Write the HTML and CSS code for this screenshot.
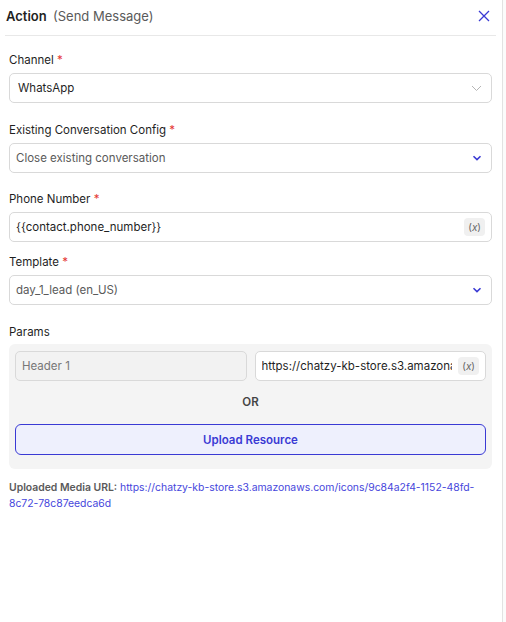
FILE: index.html
```html
<!DOCTYPE html>
<html lang="en">
<head>
    <meta charset="UTF-8">
    <meta name="viewport" content="width=device-width, initial-scale=1.0">
    <title>Action - Send Message</title>
    <link rel="stylesheet" href="styles.css">
</head>
<body>
    <div class="panel">
        <div class="panel-header">
            <div class="panel-title">Action <span class="subtitle">(Send Message)</span></div>
            <button class="close-btn" aria-label="Close">
                <svg width="12" height="12" viewBox="0 0 12 12"><path d="M1 1L11 11M11 1L1 11" stroke="currentColor" stroke-width="1.3" fill="none"/></svg>
            </button>
        </div>

        <form class="panel-body">
            <div class="field">
                <label>Channel <span class="req">*</span></label>
                <div class="select select-channel">
                    <span>WhatsApp</span>
                    <svg class="chevron muted" width="11" height="7" viewBox="0 0 11 7"><path d="M1 1l4.5 4.5L10 1" stroke="currentColor" stroke-width="1" fill="none"/></svg>
                </div>
            </div>

            <div class="field field-config">
                <label>Existing Conversation Config <span class="req">*</span></label>
                <div class="select">
                    <span class="placeholder">Close existing conversation</span>
                    <svg class="chevron" width="10" height="6" viewBox="0 0 10 6"><path d="M1.5 1.2L5 4.6l3.5-3.4" stroke="currentColor" stroke-width="1.6" fill="none"/></svg>
                </div>
            </div>

            <div class="field field-phone">
                <label>Phone Number <span class="req">*</span></label>
                <div class="input">
                    <span>{{contact.phone_number}}</span>
                    <span class="var-badge">(<i>x</i>)</span>
                </div>
            </div>

            <div class="field">
                <label>Template <span class="req">*</span></label>
                <div class="select">
                    <span class="placeholder">day_1_lead (en_US)</span>
                    <svg class="chevron" width="10" height="6" viewBox="0 0 10 6"><path d="M1.5 1.2L5 4.6l3.5-3.4" stroke="currentColor" stroke-width="1.6" fill="none"/></svg>
                </div>
            </div>

            <div class="field field-params">
                <label>Params</label>
                <div class="params-box">
                    <div class="params-row">
                        <div class="input disabled"><span>Header 1</span></div>
                        <div class="input">
                            <span class="clip">https://chatzy-kb-store.s3.amazonaws.com/icons/9c84a2f4-1152-48fd-8c72-78c87eedca6d</span>
                            <span class="var-badge">(<i>x</i>)</span>
                        </div>
                    </div>
                    <div class="or">OR</div>
                    <button type="button" class="upload-btn">Upload Resource</button>
                </div>
            </div>

            <p class="media-url"><b>Uploaded Media URL:</b> <a href="#">https://chatzy-kb-store.s3.amazonaws.com/icons/9c84a2f4-1152-48fd-8c72-78c87eedca6d</a></p>
        </form>
    </div>
</body>
</html>
```

FILE: styles.css
```css
:root {
    --accent: #3a3ad4;
    --link: #4646dc;
    --border: #d9d9d9;
    --text: #1f1f1f;
    --muted: #5a5a5a;
}

* {
    box-sizing: border-box;
}

body {
    margin: 0;
    font-family: 'Inter', 'Noto Sans', Arial, sans-serif;
    color: var(--text);
    background: #fbfbfb;
}

.panel {
    width: 503px;
    min-height: 622px;
    background: #fff;
    border-right: 1px solid #e2e2e2;
    padding: 0 6px 0 5px;
}

.panel-header {
    height: 36px;
    display: flex;
    align-items: center;
    justify-content: space-between;
    border-bottom: 1px solid #e8e8e8;
    padding: 0 0 3px 1px;
}

.panel-title {
    font-size: 13px;
    font-weight: 600;
}

.subtitle {
    font-weight: 400;
    color: var(--muted);
    margin-left: 3px;
}

.close-btn {
    border: none;
    background: none;
    padding: 0;
    margin-right: 6px;
    color: var(--accent);
    display: flex;
    cursor: pointer;
}

.panel-body {
    padding: 16px 4px 0;
}

.field {
    margin-bottom: 19px;
}

.field-config {
    margin-bottom: 18px;
}

.field-phone {
    margin-bottom: 12px;
}

.field-params {
    margin-bottom: 11px;
}

.field label {
    display: block;
    font-size: 11.5px;
    line-height: 16px;
    margin-bottom: 5px;
}

.field-params label {
    margin-bottom: 4px;
}

.req {
    color: #e53935;
}

.select,
.input {
    height: 30px;
    border: 1px solid var(--border);
    border-radius: 5px;
    background: #fff;
    display: flex;
    align-items: center;
    justify-content: space-between;
    padding: 0 6px 0 6px;
    font-size: 11.5px;
    min-width: 0;
}

.select {
    padding-right: 9px;
}

.select-channel {
    padding-left: 8px;
}

.placeholder {
    color: var(--muted);
}

.chevron {
    color: var(--accent);
    flex-shrink: 0;
}

.chevron.muted {
    color: #b5b5b5;
}

.var-badge {
    flex-shrink: 0;
    background: #f0f0f0;
    color: #666;
    border-radius: 4px;
    font-size: 10px;
    padding: 3px 4px;
    margin-left: 6px;
}

.params-box {
    background: #f4f4f4;
    border-radius: 6px;
    padding: 7px 6px 14px;
}

.params-row {
    display: grid;
    grid-template-columns: minmax(0, 1fr) minmax(0, 1fr);
    gap: 8px;
}

.input.disabled {
    background: #f2f2f2;
    color: #777;
}

.clip {
    overflow: hidden;
    white-space: nowrap;
    flex: 1;
    min-width: 0;
}

.or {
    text-align: center;
    font-size: 11.5px;
    font-weight: 600;
    color: #444;
    padding: 13px 0 14px;
    line-height: 16px;
}

.upload-btn {
    display: block;
    width: 100%;
    height: 31px;
    background: #eef0fd;
    border: 1.5px solid var(--accent);
    border-radius: 6px;
    color: var(--accent);
    font-family: inherit;
    font-size: 11.5px;
    font-weight: 600;
    cursor: pointer;
}

.media-url {
    margin: 0;
    font-size: 10.4px;
    line-height: 16px;
    color: var(--muted);
}

.media-url b {
    font-weight: 600;
}

.media-url a {
    color: var(--link);
    text-decoration: none;
}
```
